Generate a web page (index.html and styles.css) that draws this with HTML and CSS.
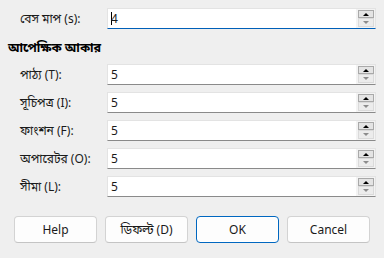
FILE: index.html
```html
<!DOCTYPE html>
<html>

<head>
  <title>আপেক্ষিক আকার</title>
  <link rel="stylesheet" href="styles.css">
</head>

<body>
  <div class="dialog">
    <div class="row">
      <label class="row-label">বেস মাপ (s):</label>
      <div class="spin-box focused">
        <span class="spin-value"><span class="caret"></span>4</span>
        <div class="spin-buttons">
          <span class="spin-up"></span>
          <span class="spin-down"></span>
        </div>
      </div>
    </div>

    <h3 class="section-title">আপেক্ষিক আকার</h3>

    <div class="row-list">
      <div class="row">
        <label class="row-label">পাঠ্য (T):</label>
        <div class="spin-box">
          <span class="spin-value">5</span>
          <div class="spin-buttons">
            <span class="spin-up"></span>
            <span class="spin-down"></span>
          </div>
        </div>
      </div>
      <div class="row">
        <label class="row-label">সূচিপত্র (I):</label>
        <div class="spin-box">
          <span class="spin-value">5</span>
          <div class="spin-buttons">
            <span class="spin-up"></span>
            <span class="spin-down"></span>
          </div>
        </div>
      </div>
      <div class="row">
        <label class="row-label">ফাংশন (F):</label>
        <div class="spin-box">
          <span class="spin-value">5</span>
          <div class="spin-buttons">
            <span class="spin-up"></span>
            <span class="spin-down"></span>
          </div>
        </div>
      </div>
      <div class="row">
        <label class="row-label">অপারেটর (O):</label>
        <div class="spin-box">
          <span class="spin-value">5</span>
          <div class="spin-buttons">
            <span class="spin-up"></span>
            <span class="spin-down"></span>
          </div>
        </div>
      </div>
      <div class="row">
        <label class="row-label">সীমা (L):</label>
        <div class="spin-box">
          <span class="spin-value">5</span>
          <div class="spin-buttons">
            <span class="spin-up"></span>
            <span class="spin-down"></span>
          </div>
        </div>
      </div>
    </div>

    <div class="button-bar">
      <button class="dlg-btn">Help</button>
      <button class="dlg-btn">ডিফল্ট (D)</button>
      <button class="dlg-btn default-btn">OK</button>
      <button class="dlg-btn">Cancel</button>
    </div>
  </div>
</body>

</html>
```

FILE: styles.css
```css
* {
  font-family: "Noto Sans", "Noto Sans Bengali", "Liberation Sans", sans-serif;
  box-sizing: border-box;
}

body {
  margin: 0;
  background-color: #efefef;
  width: 384px;
  height: 258px;
  overflow: hidden;
}

.dialog {
  padding: 8px 8px 0 8px;
}

.row {
  display: flex;
  align-items: center;
  height: 21px;
  margin-left: 12px;
}

.row-label {
  width: 87px;
  font-size: 12px;
  color: #1a1a1a;
}

.row-list {
  display: flex;
  flex-direction: column;
  gap: 7px;
}

.section-title {
  margin: 10px 0 7px 0;
  height: 18px;
  line-height: 18px;
  font-size: 12.5px;
  font-weight: bold;
  color: #000;
}

.spin-box {
  display: flex;
  width: 269px;
  height: 21px;
  border: 1px solid #e3e3e3;
  border-bottom: 1px solid #8a8a8a;
  background-color: #f3f3f3;
}

.spin-box.focused {
  border-bottom: 1px solid #005fb8;
}

.spin-value {
  flex: 1;
  display: flex;
  align-items: center;
  background-color: #fff;
  padding-left: 3px;
  font-size: 12px;
  color: #1a1a1a;
}

.caret {
  display: inline-block;
  width: 1px;
  height: 13px;
  background-color: #000;
  margin-right: -1px;
}

.spin-buttons {
  display: flex;
  flex-direction: column;
  width: 19px;
  padding: 1px 1px 0 2px;
}

.spin-up,
.spin-down {
  display: flex;
  align-items: center;
  justify-content: center;
  height: 8px;
  border: 1px solid #dadada;
  background-color: #ececec;
}

.spin-up {
  border-color: #a9a9a9;
  background-color: #e4e4e4;
}

.spin-up::after {
  content: "";
  border-left: 3px solid transparent;
  border-right: 3px solid transparent;
  border-bottom: 3px solid #000;
}

.spin-down {
  height: 9px;
}

.spin-down::after {
  content: "";
  border-left: 3px solid transparent;
  border-right: 3px solid transparent;
  border-top: 3px solid #8c8c8c;
}

.button-bar {
  display: flex;
  gap: 8px;
  margin: 19px 0 0 6px;
}

.dlg-btn {
  width: 83px;
  height: 27px;
  background-color: #fdfdfd;
  border: 1px solid #d3d3d3;
  border-bottom-color: #c4c4c4;
  border-radius: 4px;
  font-size: 12px;
  color: #1a1a1a;
  padding: 0;
}

.default-btn {
  border: 1px solid #0067c0;
  box-shadow: inset 0 0 0 1px #ffffff;
}
```
